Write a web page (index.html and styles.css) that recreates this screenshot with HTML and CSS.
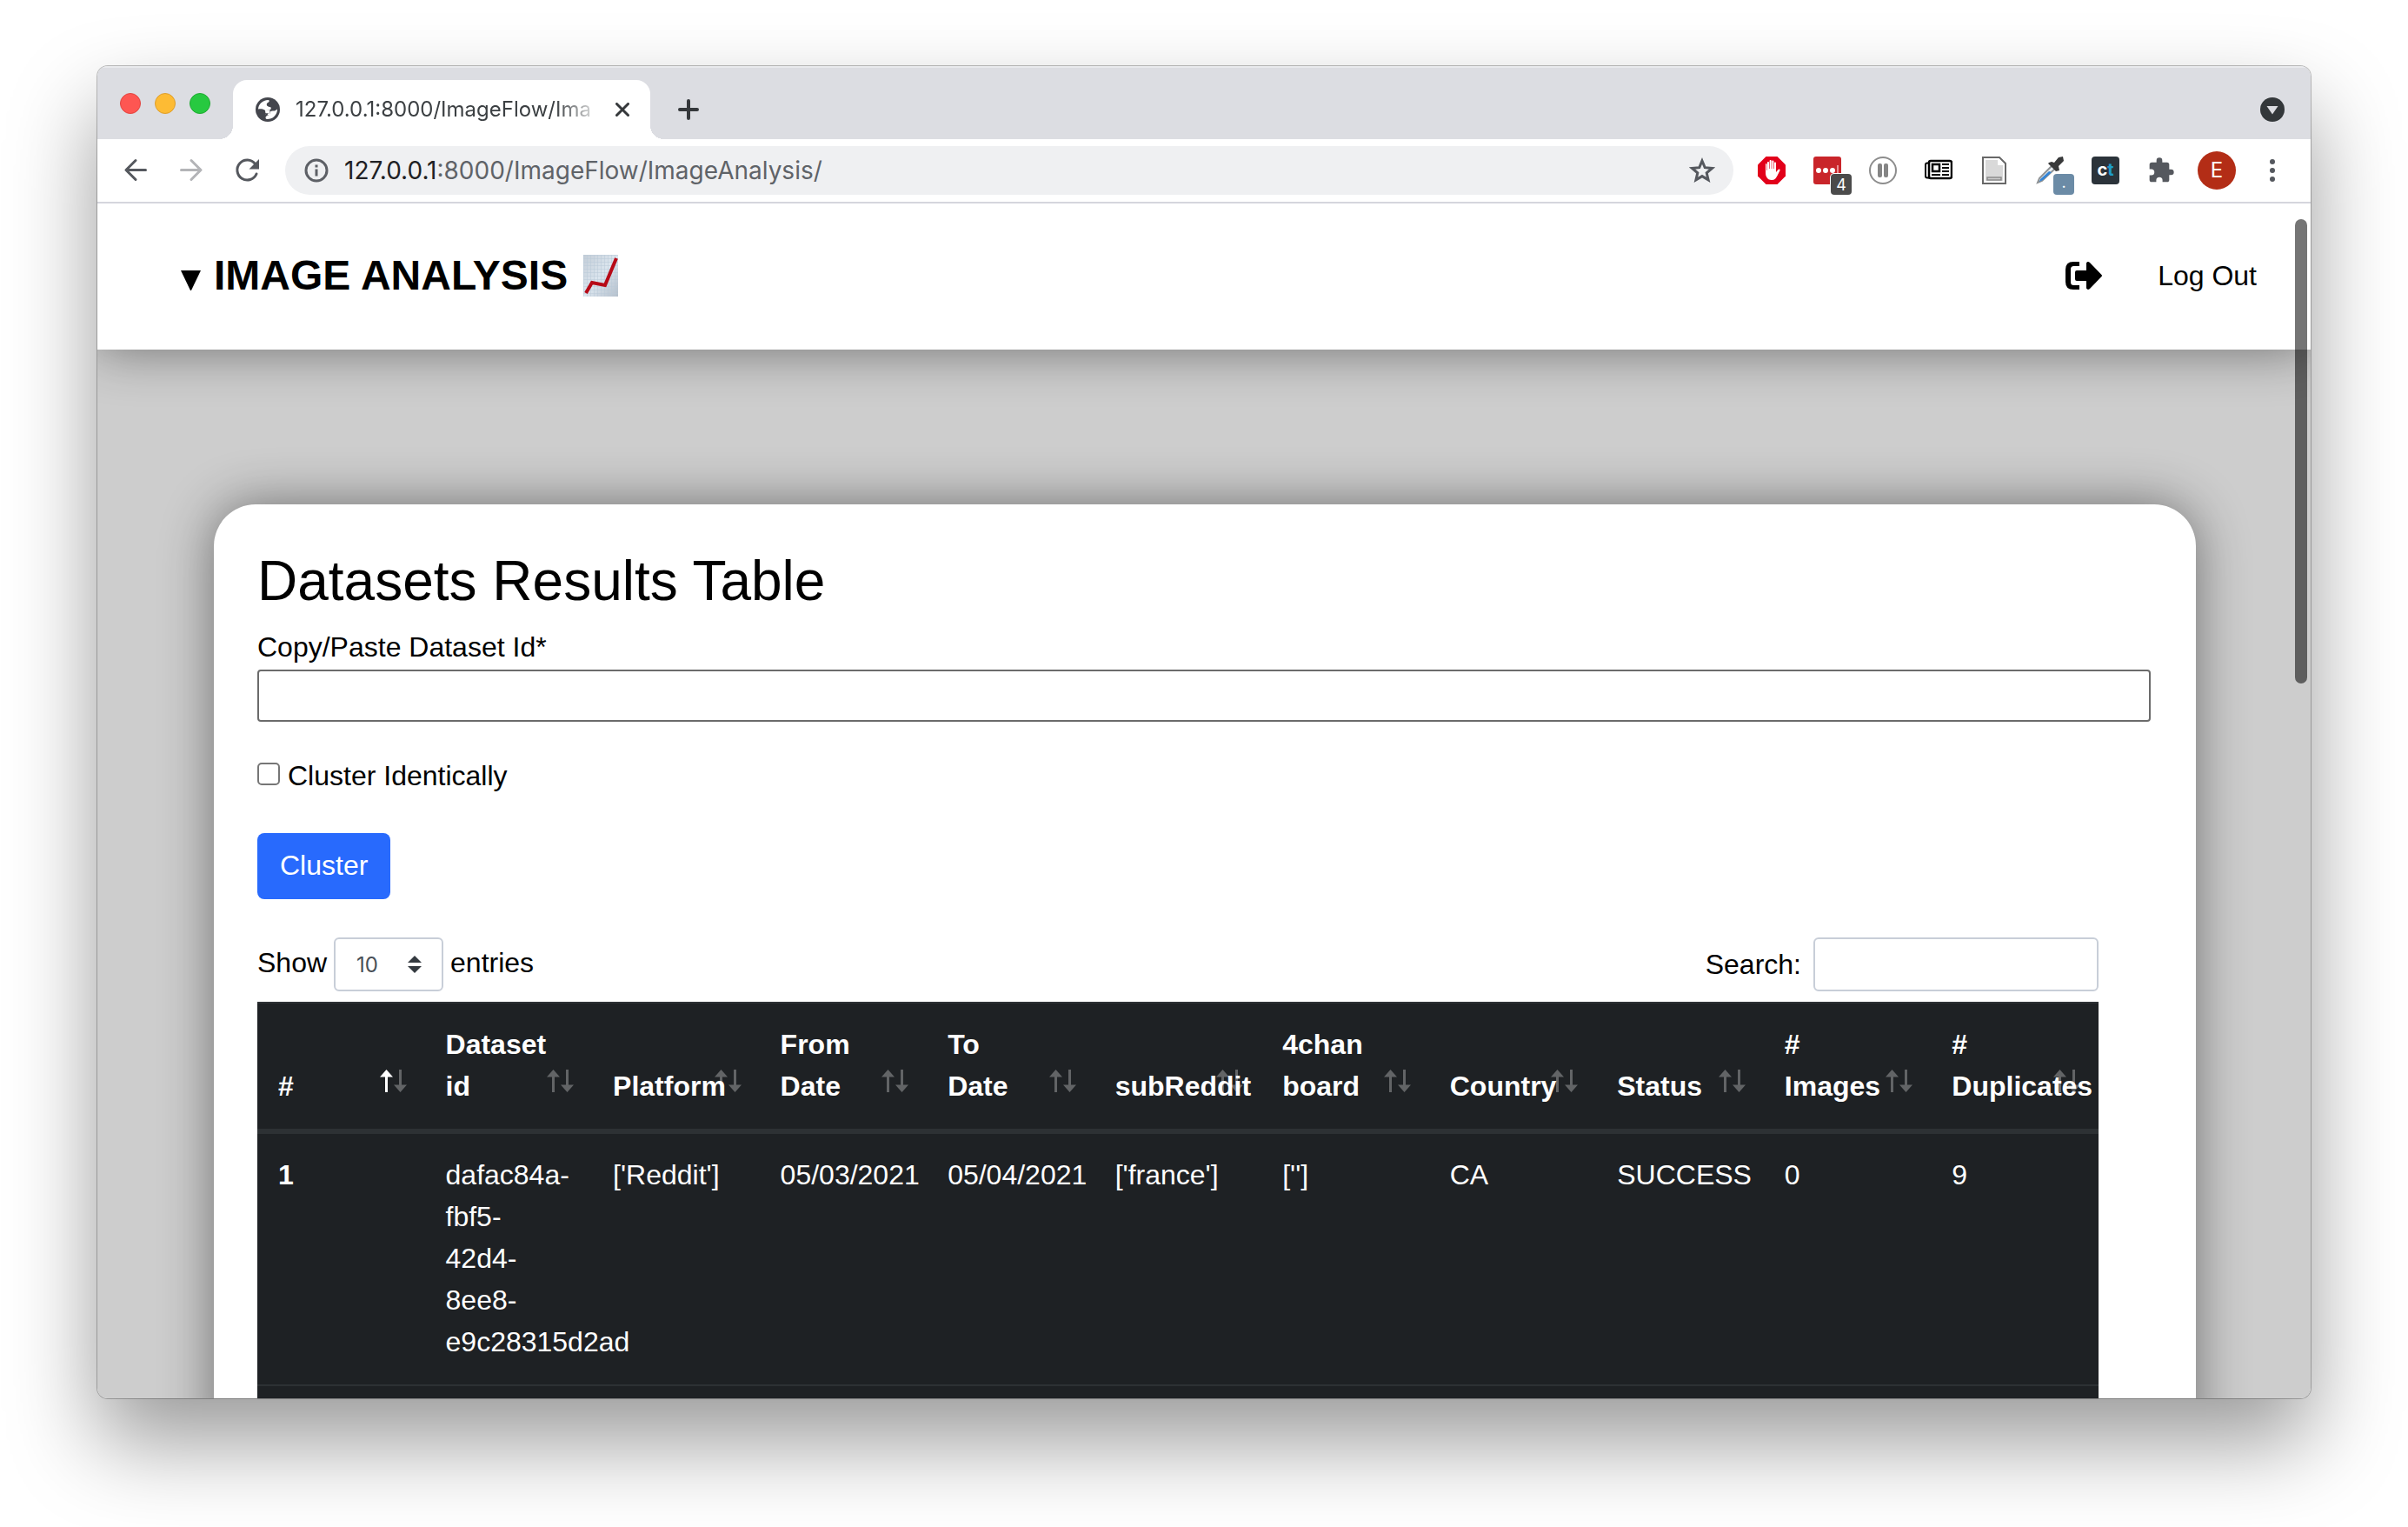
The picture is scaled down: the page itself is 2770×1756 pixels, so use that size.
FILE: index.html
```html
<!DOCTYPE html>
<html lang="en">
<head>
<meta charset="utf-8">
<title>Image Analysis</title>
<link rel="stylesheet" href="styles.css">
</head>
<body>
<svg class="sprite" aria-hidden="true">
  <symbol id="sort-up" viewBox="0 0 15 26"><path d="M7.500 0L15 8.500H9V26H6V8.500H0z"/></symbol>
  <symbol id="sort-down" viewBox="0 0 15 26"><path d="M7.500 26L0 17.500h6V0h3v17.500h6z"/></symbol>
</svg>
<div class="window">
  <div class="tabstrip">
    <div class="lights"><i class="light red"></i><i class="light amber"></i><i class="light green"></i></div>
    <div class="tab">
      <svg width="28" height="28" viewBox="0 0 28 28"><circle cx="14" cy="14" r="14" fill="#44464d"/><path d="M3 13.500C3.300 8 8 3.200 14.500 3c1.500.2 1.600 1.600.4 2.600-1.800.8-2.600 2-1.900 3.600.6 1.300 2.300 1.600 4.400 2 .9 1.400.2 2.800-1.400 3.200l-5 .6C9.500 13.300 6 13 3 13.500zM25 13.500A11.200 11.200 0 0 1 12 24.800c-.9-1.800-.4-3.300 1.200-3.800 2.400-.5 3.200-1.300 3.300-3.200.2-1.700 1.700-2.500 3.600-2.300 2 .2 3.400-.7 4.900-2z" fill="#fff"/><path d="M11 14.200l5.500.6-.5 5.700-4.500-.4z" fill="#fff"/><path d="M10 15.500l1.500 2.700H15l-3 3.500z" fill="#44464d"/></svg>
      <span class="tab-title">127.0.0.1:8000/ImageFlow/Ima</span>
      <button class="icon-btn" aria-label="Close tab"><svg width="16" height="16" viewBox="0 0 16 16" stroke="#35383b" stroke-width="3" stroke-linecap="round"><path d="M1.500 1.500l13 13m0-13l-13 13"/></svg></button>
    </div>
    <button class="icon-btn new-tab" aria-label="New tab"><svg width="24" height="24" viewBox="0 0 24 24" stroke="#35383b" stroke-width="4" stroke-linecap="round"><path d="M12 2v20M2 12h20"/></svg></button>
    <button class="icon-btn tab-search" aria-label="Search tabs"><svg width="28" height="28" viewBox="0 0 28 28"><circle cx="14" cy="14" r="14" fill="#33373a"/><path d="M7.500 10h13L14 19.500z" fill="#dcdde2"/></svg></button>
  </div>

  <div class="toolbar">
    <div class="nav-buttons">
      <button class="icon-btn" aria-label="Back"><svg width="28" height="28" viewBox="0 0 28 28" fill="none" stroke="#55585e" stroke-width="3" stroke-linecap="round" stroke-linejoin="round"><path d="M25.500 13.500H3M14 2.500L3 13.500l11 11"/></svg></button>
      <button class="icon-btn" aria-label="Forward"><svg width="28" height="28" viewBox="0 0 28 28" fill="none" stroke="#b3b4b7" stroke-width="3" stroke-linecap="round" stroke-linejoin="round"><path d="M2.500 13.500H25M14 2.500l11 11-11 11"/></svg></button>
      <button class="icon-btn" aria-label="Reload"><svg width="28" height="28" viewBox="0 0 28 28"><path d="M23.500 6.500A11.500 11.500 0 1 0 25 18" fill="none" stroke="#55585e" stroke-width="3" stroke-linecap="round"/><path d="M28 1v11.500H16.500z" fill="#55585e"/></svg></button>
    </div>
    <div class="omnibox">
      <svg width="28" height="28" viewBox="0 0 28 28"><circle cx="14" cy="14" r="12" fill="none" stroke="#5d6066" stroke-width="3"/><path d="M12.500 7.500h3v3h-3zM12.500 12.500h3v8h-3z" fill="#5d6066"/></svg>
      <span class="url"><b>127.0.0.1</b>:8000/ImageFlow/ImageAnalysis/</span>
      <button class="icon-btn" aria-label="Bookmark"><svg width="30" height="30" viewBox="0 0 30 30" fill="none" stroke="#55585e" stroke-width="3"><path d="M15 4l3.200 7.700 8.300.7-6.300 5.400 1.900 8.100L15 21.600l-7.100 4.300 1.900-8.100-6.300-5.400 8.300-.7z"/></svg></button>
    </div>
    <div class="extensions">
      <div class="ext"><svg width="32" height="32" viewBox="0 0 32 32"><path d="M9.500 0h13L32 9.500v13L22.500 32h-13L0 22.500v-13z" fill="#e2001a"/><path d="M9 9v10c0 5 3 8 7 8 3.500 0 5-2 6.500-5l3-6c.4-1.500-1.200-2-2-.9L21 18V7.500c0-1.500-2-1.500-2 0V14h-.6V5.500c0-1.500-2.100-1.500-2.100 0V14h-.6V5c0-1.500-2.100-1.500-2.100 0v9H13V7c0-1.500-2-1.500-2 0v9h-.5V9c0-1.200-1.500-1.200-1.500 0z" fill="#fff"/></svg></div>
      <div class="ext"><svg width="32" height="32" viewBox="0 0 32 32"><rect width="32" height="32" rx="3" fill="#c9252a"/><g fill="#fff"><circle cx="6" cy="16" r="3"/><circle cx="14" cy="16" r="3"/><circle cx="22" cy="16" r="3"/></g><path d="M28 10v12" stroke="#e79294" stroke-width="2"/></svg><span class="badge">4</span></div>
      <div class="ext"><svg width="32" height="32" viewBox="0 0 32 32"><circle cx="16" cy="16" r="15" fill="#fff" stroke="#8d8d8d" stroke-width="2"/><rect x="10" y="8" width="5" height="16" rx="2" fill="#858585"/><rect x="17" y="8" width="5" height="16" rx="2" fill="#858585"/></svg></div>
      <div class="ext"><svg width="32" height="32" viewBox="0 0 32 32" fill="none" stroke="#000"><path d="M4.500 7.500H3a2 2 0 0 0-2 2v13a2 2 0 0 0 2 2h3" stroke-width="2"/><rect x="5" y="5" width="26" height="20" rx="2" stroke-width="2.500"/><rect x="9" y="9" width="8" height="8" stroke-width="2.500"/><path d="M20 9h8M20 13h8M20 17h8M8 21h10M20 21h8" stroke-width="2"/></svg></div>
      <div class="ext"><svg width="32" height="32" viewBox="0 0 32 32"><path d="M3 1h19l7 7v23H3z" fill="#fff" stroke="#686868" stroke-width="2"/><path d="M6 4h14v6h6v18H6z" fill="#d9d9d9"/><path d="M8 24h16v3H8z" fill="#ccc" stroke="#8c8c8c" stroke-width="1.500"/></svg></div>
      <div class="ext"><svg width="32" height="32" viewBox="0 0 32 32"><path d="M19 10L4 25l-2 5 5-2 15-14z" fill="#e8eef2" stroke="#8e9295" stroke-width="2"/><path d="M15 17L5 26l-1 3 4-2 10-9z" fill="#3384d6"/><path d="M15 7l3-1 3 1 5-6 5-1 1 5-6 6 1 5-4 1-9-9z" fill="#38393a"/></svg><span class="badge badge-blue">.</span></div>
      <div class="ext"><span class="ct">c<em>t</em></span></div>
      <div class="ext"><svg width="32" height="32" viewBox="0 0 24 24" fill="#55585e"><path d="M20.500 11H19V7a2 2 0 0 0-2-2h-4V3.500a2.500 2.500 0 0 0-5 0V5H4a2 2 0 0 0-2 2v3.800h1.500a2.700 2.700 0 0 1 0 5.400H2V20a2 2 0 0 0 2 2h3.800v-1.500a2.700 2.700 0 0 1 5.400 0V22H17a2 2 0 0 0 2-2v-4h1.500a2.500 2.500 0 0 0 0-5z"/></svg></div>
      <div class="ext"><span class="avatar">E</span></div>
      <div class="ext"><svg width="6" height="28" viewBox="0 0 6 28" fill="#55585e"><circle cx="3" cy="4" r="3"/><circle cx="3" cy="14" r="3"/><circle cx="3" cy="24" r="3"/></svg></div>
    </div>
  </div>

  <div class="viewport">
    <header class="site-header">
      <h1 class="site-title">
        <svg width="24" height="34" viewBox="0 0 24 34"><path d="M0 11h23L11.500 35z"/></svg>
        <span>IMAGE ANALYSIS</span>
        <svg class="chart" width="40" height="48" viewBox="0 0 40 48">
          <defs>
            <linearGradient id="paper" x1="0" y1="0" x2="1" y2="1"><stop offset="0" stop-color="#c3ccd6"/><stop offset=".5" stop-color="#dce6ef"/><stop offset="1" stop-color="#b4bfcb"/></linearGradient>
            <pattern id="grid" width="4" height="4" patternUnits="userSpaceOnUse"><path d="M0 0h4M0 0v4" stroke="#b9c9d7" stroke-width="1"/></pattern>
          </defs>
          <path d="M0 0h40v48H0z" fill="url(#paper)"/><path d="M0 0h40v48H0z" fill="url(#grid)"/>
          <path d="M3 44l7-12 15 3L38 4" fill="none" stroke="#b70a17" stroke-width="4"/>
        </svg>
      </h1>
      <a class="logout" href="#">
        <svg width="42" height="32" viewBox="0 0 42 32"><path d="M16 0v5H9.500Q6 5 6 8.500v15Q6 27 9.500 27H16v5H9q-9 0-9-9V9q0-9 9-9zM13 10h11V1.500q1.500-2.500 4-.5l13.500 14q1 1 0 2L28 31q-2.500 2-4-.5V22H13q-2 0-2-2v-8q0-2 2-2z"/></svg>
        <span>Log Out</span>
      </a>
    </header>

    <main class="card">
      <h2 class="card-title">Datasets Results Table</h2>
      <form class="cluster-form">
        <label class="field-label" for="dataset-id">Copy/Paste Dataset Id*</label>
        <input class="dataset-input" id="dataset-id" type="text">
        <div class="check-row">
          <input class="check" id="identical" type="checkbox">
          <label for="identical">Cluster Identically</label>
        </div>
        <button class="btn" type="button">Cluster</button>
      </form>

      <section class="results">
        <div class="controls">
          <div class="length">
            <label class="length-text" for="page-size">Show</label>
            <span class="select-wrap">
              <select class="control select" id="page-size"><option>10</option><option>25</option></select>
              <svg class="caret" width="16" height="20" viewBox="0 0 16 20" fill="#343a40"><path d="M0 8l8-8 8 8zM0 12h16l-8 8z"/></svg>
            </span>
            <span class="length-text">entries</span>
          </div>
          <div class="search">
            <label for="search">Search:</label>
            <input class="control search-input" id="search" type="search">
          </div>
        </div>
        <table class="table">
          <thead>
            <tr>
              <th>#<span class="sort sort-asc"><svg><use href="#sort-up"/></svg><svg><use href="#sort-down"/></svg></span></th>
              <th>Dataset id<span class="sort"><svg><use href="#sort-up"/></svg><svg><use href="#sort-down"/></svg></span></th>
              <th>Platform<span class="sort"><svg><use href="#sort-up"/></svg><svg><use href="#sort-down"/></svg></span></th>
              <th>From Date<span class="sort"><svg><use href="#sort-up"/></svg><svg><use href="#sort-down"/></svg></span></th>
              <th>To<br>Date<span class="sort"><svg><use href="#sort-up"/></svg><svg><use href="#sort-down"/></svg></span></th>
              <th>subReddit<span class="sort"><svg><use href="#sort-up"/></svg><svg><use href="#sort-down"/></svg></span></th>
              <th>4chan board<span class="sort"><svg><use href="#sort-up"/></svg><svg><use href="#sort-down"/></svg></span></th>
              <th>Country<span class="sort"><svg><use href="#sort-up"/></svg><svg><use href="#sort-down"/></svg></span></th>
              <th>Status<span class="sort"><svg><use href="#sort-up"/></svg><svg><use href="#sort-down"/></svg></span></th>
              <th>#<br>Images<span class="sort"><svg><use href="#sort-up"/></svg><svg><use href="#sort-down"/></svg></span></th>
              <th>#<br>Duplicates<span class="sort"><svg><use href="#sort-up"/></svg><svg><use href="#sort-down"/></svg></span></th>
            </tr>
          </thead>
          <tbody>
            <tr>
              <th scope="row">1</th>
              <td>dafac84a-<wbr>fbf5-<wbr>42d4-<wbr>8ee8-<wbr>e9c28315d2ad</td>
              <td>['Reddit']</td>
              <td>05/03/2021</td>
              <td>05/04/2021</td>
              <td>['france']</td>
              <td>['']</td>
              <td>CA</td>
              <td>SUCCESS</td>
              <td>0</td>
              <td>9</td>
            </tr>
            <tr><td colspan="11"></td></tr>
          </tbody>
        </table>
      </section>
    </main>
    <div class="scrollbar"></div>
  </div>
</div>
</body>
</html>
```
FILE: styles.css
```css
* { box-sizing: border-box; }

body {
  margin: 0;
  height: 100vh;
  padding: 76px 112px 148px;
  background: #fff;
  color: #000;
  font: 32px/48px "Liberation Sans", Arial, sans-serif;
}

svg { display: block; flex: none; }
.sprite { position: absolute; width: 0; height: 0; }

.window {
  display: flex;
  flex-direction: column;
  height: 100%;
  overflow: hidden;
  border-radius: 12px;
  box-shadow: 0 0 0 1px rgba(0, 0, 0, .25), 0 50px 100px rgba(0, 0, 0, .4);
}

.icon-btn {
  display: flex;
  flex: none;
  padding: 0;
  border: 0;
  background: none;
}

/* Browser frame */
.tabstrip {
  display: flex;
  align-items: flex-end;
  flex: none;
  height: 84px;
  padding: 0 30px 0 26px;
  background: #dcdde2;
  box-shadow: inset 0 2px #e9eaed;
  font-family: Inter, "Noto Sans", sans-serif;
}
.lights { display: flex; gap: 16px; padding-bottom: 29px; }
.light { width: 24px; height: 24px; border-radius: 50%; border: 1px solid; }
.red { background: #fe5652; border-color: #e2443f; }
.amber { background: #fdbb34; border-color: #dd9e2c; }
.green { background: #27c940; border-color: #1eab30; }

.tab {
  position: relative;
  display: flex;
  align-items: center;
  width: 480px;
  height: 68px;
  margin-left: 26px;
  padding: 0 24px 0 26px;
  border-radius: 16px 16px 0 0;
  background: #fff;
}
.tab::before,
.tab::after {
  content: "";
  position: absolute;
  bottom: 0;
  width: 16px;
  height: 16px;
}
.tab::before { right: 100%; background: radial-gradient(circle at 0 0, transparent 16px, #fff 16px); }
.tab::after { left: 100%; background: radial-gradient(circle at 100% 0, transparent 16px, #fff 16px); }
.tab-title {
  flex: 1;
  margin: 0 16px 0 18px;
  white-space: nowrap;
  color: #3c4043;
  font-size: 24px;
  -webkit-mask-image: linear-gradient(90deg, #000 85%, transparent);
  mask-image: linear-gradient(90deg, #000 85%, transparent);
}
.new-tab { margin: 0 auto 22px 32px; }
.tab-search { margin-bottom: 20px; }

.toolbar {
  display: flex;
  align-items: center;
  flex: none;
  height: 74px;
  padding: 0 12px 0 30px;
  border-bottom: 2px solid #d5d6dd;
  background: #fff;
  font-family: Inter, "Noto Sans", sans-serif;
}
.nav-buttons { display: flex; gap: 36px; }
.omnibox {
  display: flex;
  align-items: center;
  flex: 1;
  height: 56px;
  margin: 0 12px 0 30px;
  padding: 0 21px 0 22px;
  border-radius: 28px;
  background: #eff0f2;
}
.url { flex: 1; padding-left: 18px; color: #5f6368; font-size: 28px; }
.url b { color: #202124; font-weight: 400; }
.extensions { display: grid; grid-template-columns: repeat(10, 64px); }
.ext {
  position: relative;
  display: flex;
  align-items: center;
  justify-content: center;
  height: 56px;
}
.badge {
  position: absolute;
  right: 4px;
  bottom: 0;
  width: 24px;
  height: 24px;
  border-radius: 4px;
  background: #4b4b4b;
  box-shadow: 0 0 0 1px #fff;
  color: #fff;
  font-size: 18px;
  line-height: 26px;
  text-align: center;
}
.badge-blue { background: #6b8ba6; line-height: 20px; }
.ct {
  width: 32px;
  height: 32px;
  border-radius: 4px;
  background: #2b333a;
  color: #fff;
  font-size: 20px;
  font-weight: 700;
  line-height: 30px;
  text-align: center;
}
.ct em { color: #1f9cc9; font-style: normal; }
.avatar {
  width: 44px;
  height: 44px;
  border-radius: 50%;
  background: #b32d16;
  color: #fff;
  font-size: 24px;
  line-height: 44px;
  text-align: center;
}

/* Page */
.viewport {
  position: relative;
  flex: 1;
  min-height: 0;
  overflow: hidden;
  background: #cdcdcd;
}
.scrollbar {
  position: absolute;
  top: 18px;
  right: 4px;
  width: 14px;
  height: 534px;
  border-radius: 7px;
  background: rgba(0, 0, 0, .54);
}
.site-header {
  display: flex;
  align-items: center;
  justify-content: space-between;
  height: 168px;
  padding: 0 62px 3px 96px;
  background: #fff;
  box-shadow: 0 0 60px rgba(0, 0, 0, .46);
}
.site-title {
  display: flex;
  align-items: center;
  gap: 14px;
  margin: 0;
  font-size: 48px;
}
.chart { margin-left: 4px; }
.logout {
  display: flex;
  align-items: center;
  gap: 64px;
  color: inherit;
  text-decoration: none;
}

.card {
  margin: 178px 132px 60px 134px;
  padding: 50px 52px 50px 50px;
  border-radius: 48px;
  background: #fff;
  box-shadow: 0 0 60px rgba(0, 0, 0, .46);
}
.card-title {
  margin: 0 0 14px;
  font-size: 64px;
  font-weight: 400;
  line-height: 76px;
}
.field-label { display: block; padding-bottom: 2px; }
.dataset-input {
  display: block;
  width: 100%;
  height: 60px;
  padding: 0 8px;
  border: 2px solid #6b6b6b;
  border-radius: 4px;
  background: #fff;
  font: inherit;
}
.check-row {
  display: flex;
  align-items: center;
  gap: 9px;
  margin: 38px 0 42px;
}
.check {
  appearance: none;
  width: 26px;
  height: 26px;
  margin: 0 0 4px;
  border: 2px solid #767676;
  border-radius: 5px;
  background: #fff;
}
.btn {
  height: 76px;
  padding: 0 26px 2px;
  border: 0;
  border-radius: 8px;
  background: #286afd;
  color: #fff;
  font: inherit;
}

.results { margin: 44px 60px 0 0; }
.controls {
  display: flex;
  justify-content: space-between;
  padding-bottom: 12px;
}
.length,
.search { display: flex; align-items: center; }
.length { gap: 8px; }
.length-text { padding-bottom: 4px; }
.search { gap: 14px; }
.control {
  display: block;
  height: 62px;
  padding: 0 24px;
  border: 2px solid #c8ced8;
  border-radius: 6px;
  background: #fff;
  color: #495057;
  font: 24px Inter, Arial, sans-serif;
}
.select-wrap { position: relative; }
.select { appearance: none; width: 126px; }
.caret { position: absolute; right: 25px; top: 21px; pointer-events: none; }
.search-input { width: 328px; }

.table {
  width: 100%;
  table-layout: fixed;
  border-collapse: separate;
  border-spacing: 0;
  background: #1e2124;
  color: #fff;
}
.table th,
.table td {
  padding: 23px 24px 25px;
  border-top: 2px solid #2d3134;
  text-align: left;
  vertical-align: top;
}
.table thead th {
  position: relative;
  border-bottom: 6px solid #2d3134;
  vertical-align: bottom;
}
.table tbody tr:first-child > * { border-top: 0; }
.sort {
  position: absolute;
  right: 21px;
  bottom: 42px;
  display: flex;
  gap: 1px;
}
.sort svg { width: 15px; height: 26px; fill: #fff; opacity: .3; }
.sort-asc svg:first-child { opacity: 1; }
```
